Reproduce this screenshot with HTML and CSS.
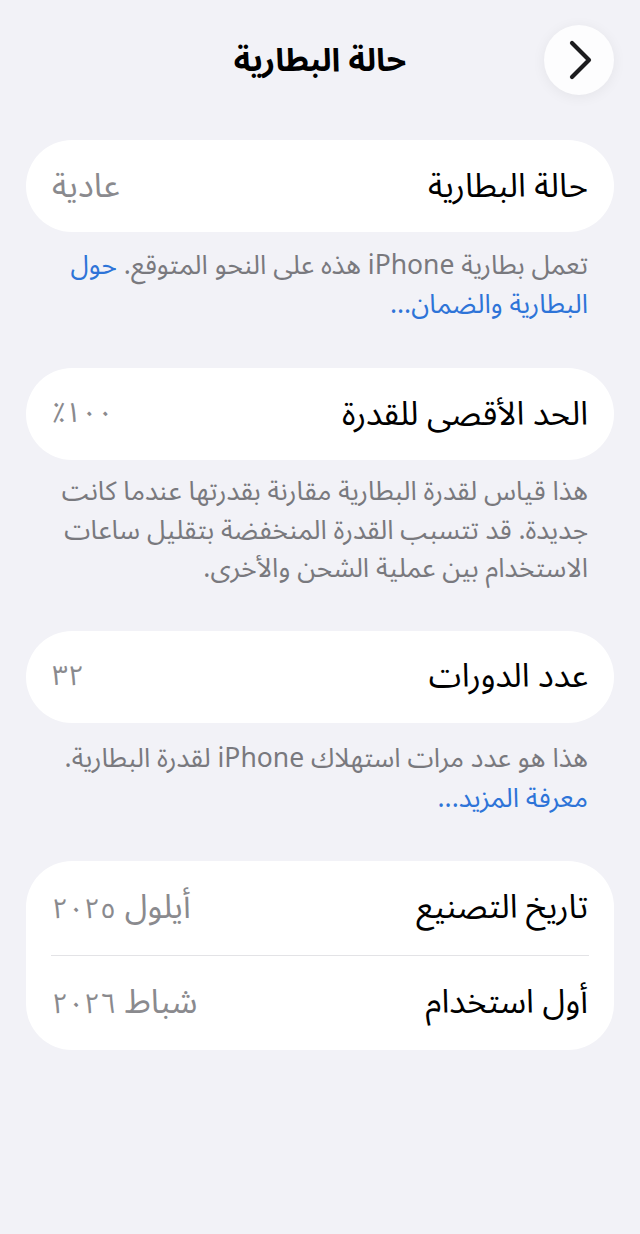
FILE: index.html
```html
<!DOCTYPE html>
<html lang="ar" dir="rtl">
<head>
<meta charset="utf-8">
<title>حالة البطارية</title>
<link rel="stylesheet" href="styles.css">
</head>
<body>
<header class="nav">
  <button class="back" aria-label="رجوع">
    <svg width="30" height="40" viewBox="0 0 30 40"><path d="M7 3 L24 20 L7 37" fill="none" stroke="#1c1c1e" stroke-width="4.2" stroke-linecap="round" stroke-linejoin="round"/></svg>
  </button>
  <h1 class="title">حالة البطارية</h1>
  <span class="spacer"></span>
</header>
<main class="content">
  <section class="card">
    <div class="row"><span class="label">حالة البطارية</span><span class="value">عادية</span></div>
  </section>
  <p class="footer">تعمل بطارية iPhone هذه على النحو المتوقع. <a class="link">حول البطارية والضمان...</a></p>

  <section class="card">
    <div class="row"><span class="label">الحد الأقصى للقدرة</span><span class="value num">١٠٠٪</span></div>
  </section>
  <p class="footer f2">هذا قياس لقدرة البطارية مقارنة بقدرتها عندما كانت جديدة. قد تتسبب القدرة المنخفضة بتقليل ساعات الاستخدام بين عملية الشحن والأخرى.</p>

  <section class="card">
    <div class="row"><span class="label">عدد الدورات</span><span class="value num">٣٢</span></div>
  </section>
  <p class="footer f3">هذا هو عدد مرات استهلاك iPhone لقدرة البطارية.<br><a class="link">معرفة المزيد...</a></p>

  <section class="card">
    <div class="row tall"><span class="label">تاريخ التصنيع</span><span class="value">أيلول <span class="num">٢٠٢٥</span></span></div>
    <div class="divider"></div>
    <div class="row tall"><span class="label">أول استخدام</span><span class="value">شباط <span class="num">٢٠٢٦</span></span></div>
  </section>
</main>
</body>
</html>
```

FILE: styles.css
```css
* { box-sizing: border-box; }
html, body {
  margin: 0;
  padding: 0;
  background: #f2f2f7;
}
body {
  font-family: "Noto Sans Arabic", "DejaVu Sans", sans-serif;
  color: #000;
  width: 640px;
  min-height: 1234px;
}
.nav {
  display: grid;
  grid-template-columns: 70px 1fr 70px;
  align-items: center;
  padding: 25px 26px 0;
  height: 95px;
}
.back {
  width: 70px;
  height: 70px;
  border-radius: 50%;
  border: none;
  background: #fdfdfe;
  box-shadow: 0 2px 14px rgba(0, 0, 0, 0.06);
  display: flex;
  align-items: center;
  justify-content: center;
  padding: 0;
}
.back svg { margin-left: 2px; }
.title {
  margin: 0;
  text-align: center;
  font-size: 32px;
  font-weight: 700;
  line-height: 1;
  padding-top: 2px;
}
.content {
  padding: 45px 26px 0;
}
.card {
  background: #fff;
  border-radius: 46px;
  overflow: hidden;
}
.row {
  height: 92px;
  display: flex;
  align-items: center;
  justify-content: space-between;
  padding: 0 26px;
  font-size: 33px;
  line-height: 1;
}
.row.tall { height: 94px; }
.label { color: #000; }
.value { color: #8a8a8e; }
.num { font-size: 28px; }
.divider {
  height: 1px;
  background: #e3e3e6;
  margin: 0 25px;
}
.footer {
  margin: 15px 0 44px;
  padding: 0 26px;
  font-size: 26.5px;
  line-height: 38.5px;
  color: #79797e;
}
.footer.f2 { margin: 13px 0 42px; }
.footer.f3 { margin: 16px 0 42px; line-height: 40px; }
.link { color: #2e74d8; }
```
